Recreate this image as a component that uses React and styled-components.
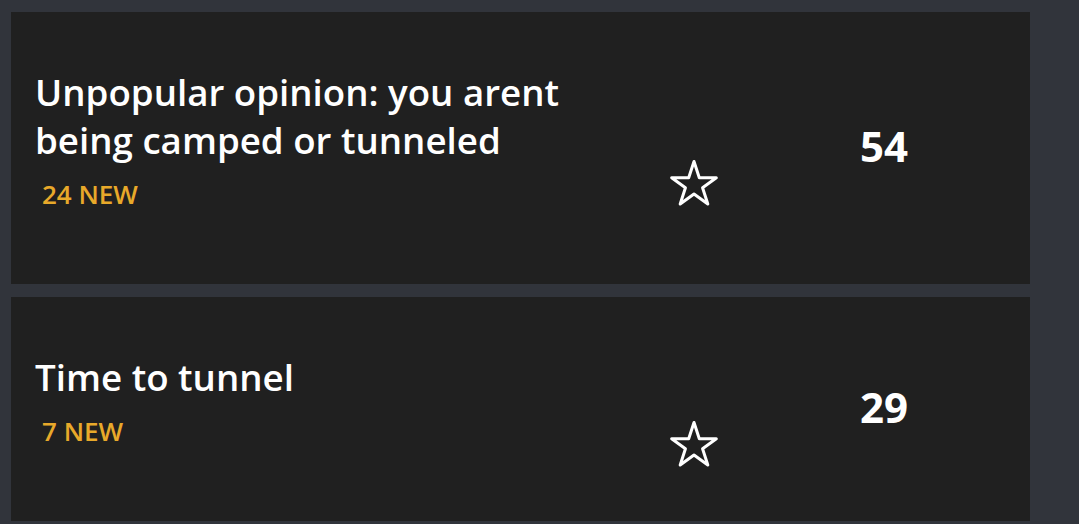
import React from "react";
import styled, { createGlobalStyle } from "styled-components";

const Global = createGlobalStyle`
  html, body { margin: 0; padding: 0; background: #31343b; }
  body { font-family: "Open Sans", "Noto Sans", sans-serif; }
`;

const Page = styled.div`
  width: 1079px;
  height: 524px;
  box-sizing: border-box;
  padding: 12px 0 0 11px;
  display: flex;
  flex-direction: column;
  gap: 13px;
  background: #31343b;
  overflow: hidden;
`;

const Card = styled.div`
  width: 1019px;
  box-sizing: border-box;
  background: #202020;
  display: grid;
  grid-template-columns: 634px 50px 141px auto;
  align-items: center;
  padding: 56px 0 72px 24px;
`;

const Info = styled.div`
  display: flex;
  flex-direction: column;
  gap: 12px;
`;

const Title = styled.div`
  color: #ffffff;
  font-size: 36.7px;
  font-weight: 600;
  line-height: 48px;
  max-width: 590px;
`;

const NewCount = styled.div`
  color: #e8a92a;
  font-size: 26px;
  font-weight: 600;
  line-height: 36px;
  padding-left: 7px;
`;

const StarButton = styled.button`
  grid-column: 2;
  width: 50px;
  height: 50px;
  padding: 0;
  border: 0;
  background: transparent;
  display: flex;
  cursor: pointer;
  transform: translateY(44px);
`;

const Count = styled.div`
  grid-column: 4;
  color: #ffffff;
  font-size: 42px;
  font-weight: 700;
  line-height: 1;
  padding-top: 11px;
`;

const starPoints = (() => {
  const cx = 25, cy = 26, R = 23.5, r = 9;
  const pts = [];
  for (let i = 0; i < 10; i++) {
    const a = (-90 + i * 36) * (Math.PI / 180);
    const rad = i % 2 === 0 ? R : r;
    pts.push(`${(cx + rad * Math.cos(a)).toFixed(2)},${(cy + rad * Math.sin(a)).toFixed(2)}`);
  }
  return pts.join(" ");
})();

const StarIcon = () => (
  <svg width="50" height="50" viewBox="0 0 50 50" aria-hidden="true">
    <polygon
      points={starPoints}
      fill="none"
      stroke="#ffffff"
      strokeWidth="3"
      strokeLinejoin="round"
    />
  </svg>
);

const threads = [
  { title: "Unpopular opinion: you arent being camped or tunneled", fresh: 24, count: 54 },
  { title: "Time to tunnel", fresh: 7, count: 29 },
];

export default function App() {
  return (
    <>
      <Global />
      <Page>
        {threads.map((t) => (
          <Card key={t.title}>
            <Info>
              <Title>{t.title}</Title>
              <NewCount>{t.fresh} NEW</NewCount>
            </Info>
            <StarButton aria-label="Favorite">
              <StarIcon />
            </StarButton>
            <Count>{t.count}</Count>
          </Card>
        ))}
      </Page>
    </>
  );
}
